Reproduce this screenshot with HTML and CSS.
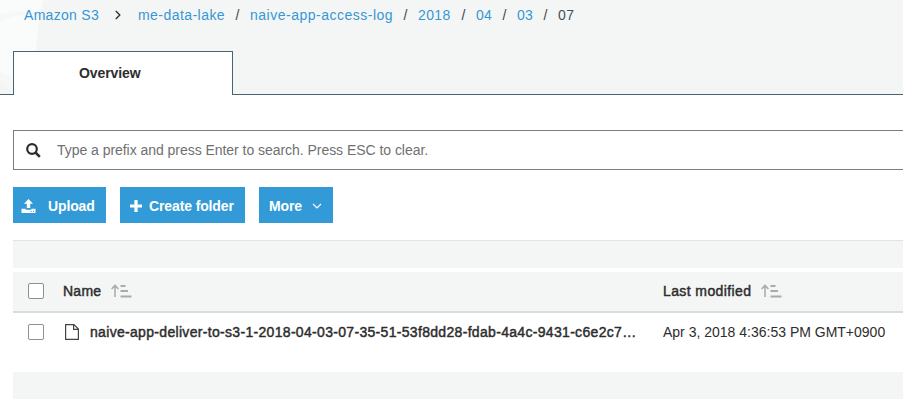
FILE: index.html
```html
<!DOCTYPE html>
<html lang="en">
<head>
<meta charset="utf-8">
<title>Amazon S3</title>
<link rel="stylesheet" href="styles.css">
</head>
<body>
<header class="top">
  <svg class="watermark" width="45" height="94" viewBox="0 0 45 94" aria-hidden="true"><path d="M0 0H43Q37 25 36 51H13V87L0 80Z" fill="#fafcfb"/><path d="M0 14Q18 8 38 13L38 16Q18 12 0 22ZM0 71Q7 74 13 78V86L0 80Z" fill="#f6f8f8"/></svg>
  <nav class="crumbs">
    <a class="c-root">Amazon S3</a>
    <svg class="chev" width="6" height="10" viewBox="0 0 6 10"><path d="M.8 1 4.8 5 .8 9" fill="none" stroke="#333" stroke-width="1.4"/></svg>
    <a class="c-bucket">me-data-lake</a><i>/</i><a class="c-log">naive-app-access-log</a><i>/</i><a class="c-year">2018</a><i>/</i><a class="c-two">04</a><i>/</i><a class="c-two">03</a><i>/</i><span>07</span>
  </nav>
  <div class="tabs"><div class="tab"><span>Overview</span></div></div>
</header>
<main>
  <div class="search">
    <svg width="15" height="15" viewBox="0 0 15 15"><circle cx="6" cy="6" r="4.8" fill="none" stroke="#2d2d2d" stroke-width="2.2"/><path d="m9.5 9.5 4.3 4.3" stroke="#2d2d2d" stroke-width="2.5"/></svg>
    <span>Type a prefix and press Enter to search. Press ESC to clear.</span>
  </div>
  <div class="actions">
    <button class="btn upload"><svg width="15" height="15" viewBox="0 0 15 15" fill="#fff"><path d="M7.5 0 12 4.8H9.2V9H5.8V4.8H3ZM.5 9.7H4.6V10.8H10.4V9.7H14.5V14H.5Z"/><path d="M9.7 12.5h1M12 12.5h1" stroke="#329ad6"/></svg><span>Upload</span></button>
    <button class="btn create"><svg width="12" height="12" viewBox="0 0 12 12"><path d="M6 0V12M0 6H12" stroke="#fff" stroke-width="3.2"/></svg><span>Create folder</span></button>
    <button class="btn more"><span>More</span><svg width="10" height="6" viewBox="0 0 10 6"><path d="M1 1 5 5 9 1" fill="none" stroke="#fff" stroke-width="1.2"/></svg></button>
  </div>
  <div class="band upper"></div>
  <section class="table">
    <div class="row head">
      <span class="check"></span>
      <div class="name"><span class="t-name">Name</span><svg class="sort" width="21" height="14" viewBox="0 0 21 14"><path d="M4 13V2M.6 5 4 1.4 7.4 5" fill="none" stroke="#a7abab" stroke-width="1.5"/><path d="M9.5 2h5M9.5 7h7.5M9.5 12.5h11" stroke="#a7abab" stroke-width="2"/></svg></div>
      <div class="date"><span class="t-mod">Last modified</span><svg class="sort" width="21" height="14" viewBox="0 0 21 14"><path d="M4 13V2M.6 5 4 1.4 7.4 5" fill="none" stroke="#a7abab" stroke-width="1.5"/><path d="M9.5 2h5M9.5 7h7.5M9.5 12.5h11" stroke="#a7abab" stroke-width="2"/></svg></div>
    </div>
    <div class="row item">
      <span class="check"></span>
      <div class="name"><svg class="file" width="14" height="16" viewBox="0 0 14 16"><path d="M.6 .6H9L13.4 5V15.4H.6ZM8.6 .8V5.4H13.2" fill="#fff" stroke="#444" stroke-width="1.2"/></svg><span class="t-file">naive-app-deliver-to-s3-1-2018-04-03-07-35-51-53f8dd28-fdab-4a4c-9431-c6e2c7…</span></div>
      <div class="date"><span class="t-date">Apr 3, 2018 4:36:53 PM GMT+0900</span></div>
    </div>
  </section>
  <div class="band lower"></div>
</main>
</body>
</html>
```

FILE: styles.css
```css
* { box-sizing: border-box; }
body { margin: 0; height: 416px; overflow: hidden; background: #fff; color: #2d2d2d; font: 14px/20px "Liberation Sans", Arial, sans-serif; }
svg { display: block; flex: none; }
span, a, i { white-space: nowrap; }
.top { position: relative; height: 95px; background: #f4f6f6; border-bottom: 1px solid #496373; }
.watermark { position: absolute; left: 0; top: 0; }
.crumbs { position: relative; display: flex; align-items: center; height: 51px; padding: 0 0 21px 24px; }
.crumbs a { color: #3796d5; flex: none; }
.crumbs i { width: 25px; flex: none; text-align: center; font-style: normal; color: #444; }
.crumbs span { color: #444f59; letter-spacing: .4px; }
.c-root { width: 76px; letter-spacing: .3px; }
.chev { margin: 0 17px 0 15px; }
.c-bucket { width: 87px; letter-spacing: .45px; }
.c-log { width: 143px; letter-spacing: .5px; }
.c-year { width: 33px; letter-spacing: .4px; }
.c-two { width: 16px; letter-spacing: .2px; }
.tabs { position: relative; height: 44px; padding-left: 13px; }
.tab { width: 220px; height: 44px; padding: 11px 0 0 65px; border: 1px solid #496373; border-bottom: 0; background: #fff; font-weight: 700; font-size: 14px; letter-spacing: -.1px; }
main { padding: 35px 0 0 13px; }
.search { display: flex; align-items: center; height: 40px; padding-left: 12px; gap: 16px; border: 1px solid #7d7d7d; border-right: 0; color: #707070; letter-spacing: -.04px; }
.actions { display: flex; gap: 14px; margin-top: 17px; height: 36px; }
.btn { display: flex; align-items: center; height: 36px; margin: 0; padding: 2px 0 0; border: 0; background: #329ad6; color: #fff; font: 700 14px/20px "Liberation Sans", Arial, sans-serif; letter-spacing: -.12px; }
.upload { width: 93px; padding-left: 8px; gap: 12px; }
.create { width: 125px; padding-left: 10px; gap: 7px; }
.more { width: 74px; padding-left: 10px; gap: 10px; }
.band { background: #f4f6f6; }
.upper { height: 28px; margin-top: 17px; border-top: 1px solid #e2e4e4; }
.table { margin-top: 4px; }
.row { display: grid; grid-template-columns: 50px 600px 1fr; align-items: center; }
.head { height: 41px; padding-bottom: 1px; border-bottom: 2px solid #dadcdc; background: #f4f6f6; }
.item { height: 59px; padding-bottom: 21px; }
.check { width: 16px; height: 16px; margin-left: 15px; border: 1px solid #879196; border-radius: 2px; background: #fff; }
.name, .date { display: flex; align-items: center; }
.sort { margin-left: 10px; }
.file { margin: 0 11px 0 2px; }
.t-name, .t-mod, .t-file { -webkit-text-stroke: .45px #2d2d2d; }
.t-name { letter-spacing: .25px; }
.t-mod { letter-spacing: .4px; }
.t-file { letter-spacing: .315px; }
.lower { height: 27px; }
```
